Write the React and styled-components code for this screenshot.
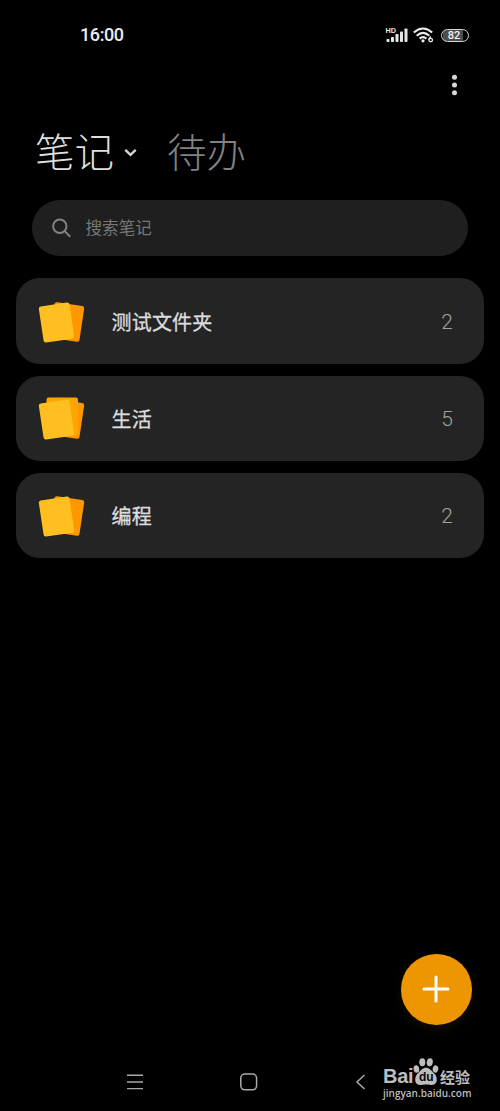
import React from "react";
import styled, { createGlobalStyle } from "styled-components";

const GlobalStyle = createGlobalStyle`
  * { box-sizing: border-box; }
  html, body { margin: 0; padding: 0; background: #000; }
  body { font-family: "Noto Sans", "Noto Sans CJK SC", sans-serif; }
  svg { display: block; }
`;

const Screen = styled.main`
  position: relative;
  width: 500px;
  height: 1111px;
  overflow: hidden;
  background: #000;
  display: flex;
  flex-direction: column;
`;

const StatusBar = styled.header`
  height: 70px;
  padding: 0 31px 0 80px;
  display: flex;
  align-items: center;
  justify-content: space-between;
`;

const Clock = styled.time`
  font: 500 18px/24px Roboto, sans-serif;
  letter-spacing: -0.4px;
  color: #ececec;
`;

const StatusIcons = styled.div`
  display: flex;
  align-items: center;
`;

const Battery = styled.div`
  width: 28px;
  height: 13px;
  margin-left: 7px;
  border: 1.4px solid #d6d6d6;
  border-radius: 7px;
  background: linear-gradient(90deg, #000 5%, #4d4d4d 5%, #4d4d4d 82%, #000 82%);
  color: #f4f4f4;
  font: 500 11px/11.5px Roboto, sans-serif;
  padding-right: 2px;
  text-align: center;
`;

const Toolbar = styled.div`
  height: 30px;
  padding-right: 41px;
  display: flex;
  align-items: center;
  justify-content: flex-end;
`;

const Tabs = styled.nav`
  height: 100px;
  padding: 0 35px;
  display: flex;
  align-items: center;
`;

const Tab = styled.span`
  font: 200 39.5px/60px "Noto Sans CJK SC", sans-serif;
  color: ${(p) => (p.$active ? "#dedede" : "#828282")};
  margin-left: ${(p) => (p.$active ? 0 : 30)}px;
  white-space: nowrap;
`;

const Chevron = styled.svg`
  margin: 5px 0 0 10px;
`;

const SearchBox = styled.div`
  height: 56px;
  margin: 0 32px;
  padding: 0 20px;
  border-radius: 28px;
  background: #1f1f1f;
  display: flex;
  align-items: center;
  gap: 13.5px;
`;

const Placeholder = styled.span`
  font: 400 16.6px/24px "Noto Sans CJK SC", sans-serif;
  color: #767676;
  padding-bottom: 2px;
`;

const FolderList = styled.ul`
  list-style: none;
  margin: 0;
  padding: 22.4px 16px 0;
  display: flex;
  flex-direction: column;
  gap: 11.8px;
`;

const Folder = styled.li`
  height: 85.4px;
  padding: 2px 31px 0 22px;
  border-radius: 24px;
  background: #242424;
  display: flex;
  align-items: center;
`;

const NotesIcon = styled.svg`
  margin-top: 1px;
`;

const FolderName = styled.span`
  flex: 1;
  margin-left: 25.5px;
  font: 400 20px/30px "Noto Sans CJK SC", sans-serif;
  letter-spacing: 0.2px;
  -webkit-text-stroke: 0.3px #dddddf;
  color: #dddddf;
`;

const Count = styled.span`
  font: 300 21px/30px Roboto, sans-serif;
  color: #a0a0a0;
`;

const AddButton = styled.button`
  position: absolute;
  right: 28.5px;
  bottom: 86.5px;
  width: 70.5px;
  height: 70.5px;
  padding: 0;
  border: 0;
  border-radius: 50%;
  background: #ee9602;
  box-shadow: 0 5px 10px rgba(238, 150, 2, 0.08);
  display: flex;
  align-items: center;
  justify-content: center;
`;

const NavBar = styled.footer`
  margin-top: auto;
  height: 58px;
  padding: 0 132px 0 126px;
  display: flex;
  align-items: center;
  justify-content: space-between;
`;

const Watermark = styled.div`
  position: absolute;
  left: 383px;
  top: 1055px;
  width: 92px;
  color: #bdbdbd;
`;

const Brand = styled.div`
  height: 32px;
  display: flex;
  align-items: flex-end;
`;

const BrandLatin = styled.span`
  font: 700 20px/18px "Liberation Sans", sans-serif;
  letter-spacing: -0.3px;
  padding-bottom: 2px;
  width: 30px;
`;

const BrandHan = styled.span`
  font: 700 15px/20px "Noto Sans CJK SC", sans-serif;
  margin-left: 1px;
`;

const Paw = styled.div`
  position: relative;
  width: 26px;
  height: 31px;
`;

const PawText = styled.span`
  position: absolute;
  left: 6px;
  top: 14px;
  color: #080808;
  font: 700 12px/14px "Liberation Sans", sans-serif;
`;

const Site = styled.div`
  font: 600 10px/12px "Open Sans", sans-serif;
  white-space: nowrap;
`;

const Signal = () => (
  <svg width="23" height="18" viewBox="0 0 23 18" fill="#e5e5e5">
    <text x="0.5" y="6.5" fontSize="7.5" fontWeight="700" fontFamily="Liberation Sans" textLength="10.5" lengthAdjust="spacingAndGlyphs">HD</text>
    <rect x="1.5" y="13" width="3" height="3" rx="0.8" />
    <rect x="6" y="11" width="3" height="5" rx="0.8" />
    <rect x="10.5" y="8" width="3" height="8" rx="0.8" />
    <rect x="15" y="5.5" width="3" height="10.5" rx="0.8" />
    <rect x="19.5" y="2.5" width="3" height="13.5" rx="0.8" />
  </svg>
);

const WifiIcon = styled.svg`
  margin-left: 5px;
`;

const Wifi = () => (
  <WifiIcon width="21" height="18" viewBox="0 0 21 18" fill="none" stroke="#ededed" strokeWidth="2.1">
    <path d="M.8 6.5Q10 -1.5 19.2 6.5M3.7 9.7Q10 4 16.3 9.7M6.6 12.6Q10 9.6 13.4 12.6" />
    <circle cx="10" cy="14.8" r="1.6" fill="#ededed" stroke="none" />
    <path d="M18 10.6Q15.9 12.3 15.9 14" strokeWidth="1.3" />
    <circle cx="17.7" cy="14.1" r="1.8" strokeWidth="1.3" />
  </WifiIcon>
);

const Notes = ({ full }) => (
  <NotesIcon width="48" height="46" viewBox="0 0 48 46">
    <rect x="14" y="4" width="30" height="36" rx="2.3" fill="#ff9700" transform="rotate(8.5 29 22)" />
    {full && <rect x="8.5" y="0.5" width="31.5" height="38" rx="2.3" fill="#ffa500" />}
    <rect x="3" y="4.3" width="31" height="36.5" rx="2.3" fill="#ffbf21" transform="rotate(-8.5 18.5 22.3)" />
  </NotesIcon>
);

const SquareIcon = styled.svg`
  margin-left: -2px;
`;

const folders = [
  { name: "测试文件夹", count: 2 },
  { name: "生活", count: 5, full: true },
  { name: "编程", count: 2 },
];

export default function App() {
  return (
    <>
      <GlobalStyle />
      <Screen>
        <StatusBar>
          <Clock>16:00</Clock>
          <StatusIcons>
            <Signal />
            <Wifi />
            <Battery>82</Battery>
          </StatusIcons>
        </StatusBar>
        <Toolbar>
          <svg width="9" height="24" viewBox="0 0 9 24" fill="#d9d9d9">
            <circle cx="4.5" cy="4.2" r="2.5" />
            <circle cx="4.5" cy="12" r="2.5" />
            <circle cx="4.5" cy="19.8" r="2.5" />
          </svg>
        </Toolbar>
        <Tabs>
          <Tab $active>笔记</Tab>
          <Chevron width="13" height="9" viewBox="0 0 13 9" fill="none" stroke="#d6d6d6" strokeWidth="2.4">
            <path d="M1.3 1.8L6.5 6.8L11.7 1.8" />
          </Chevron>
          <Tab>待办</Tab>
        </Tabs>
        <SearchBox>
          <svg width="20" height="20" viewBox="0 0 20 20" fill="none" stroke="#828282" strokeWidth="2">
            <circle cx="7.8" cy="8.3" r="6.7" />
            <path d="M12.7 13.1L18.2 18.7" />
          </svg>
          <Placeholder>搜索笔记</Placeholder>
        </SearchBox>
        <FolderList>
          {folders.map((f) => (
            <Folder key={f.name}>
              <Notes full={f.full} />
              <FolderName>{f.name}</FolderName>
              <Count>{f.count}</Count>
            </Folder>
          ))}
        </FolderList>
        <AddButton aria-label="新建">
          <svg width="28" height="28" viewBox="0 0 28 28" stroke="#fff" strokeWidth="3" strokeLinecap="round">
            <path d="M14 2V26M2 14H26" />
          </svg>
        </AddButton>
        <NavBar>
          <svg width="18" height="18" viewBox="0 0 18 18" stroke="#a8a8a8" strokeWidth="1.4">
            <path d="M1 2.2H17M1 9H17M1 15.6H17" />
          </svg>
          <SquareIcon width="18" height="18" viewBox="0 0 18 18" fill="none" stroke="#aaa" strokeWidth="1.5">
            <rect x="0.8" y="1" width="15.8" height="15.8" rx="4" />
          </SquareIcon>
          <svg width="13" height="18" viewBox="0 0 13 18" fill="none" stroke="#aaa" strokeWidth="1.5">
            <path d="M9.5 2L2 9L9.5 16" />
          </svg>
        </NavBar>
        <Watermark>
          <Brand>
            <BrandLatin>Bai</BrandLatin>
            <Paw>
              <svg width="26" height="30" viewBox="0 0 26 30" fill="#bdbdbd">
                <ellipse cx="3.4" cy="13" rx="2.8" ry="3.8" transform="rotate(-12 3.4 13)" />
                <ellipse cx="9.3" cy="6.3" rx="3" ry="4" />
                <ellipse cx="16.8" cy="6.3" rx="3" ry="4" transform="rotate(10 16.8 6.3)" />
                <ellipse cx="22.5" cy="13" rx="2.8" ry="3.7" transform="rotate(12 22.5 13)" />
                <path d="M13 11.8C9.5 11.8 8 14.5 5.2 17C1 20.5 .8 28.5 7 29C10 29.2 11 28.6 13 28.6S16 29.2 19 29C25.2 28.5 25 20.5 20.8 17C18 14.5 16.5 11.8 13 11.8Z" />
              </svg>
              <PawText>du</PawText>
            </Paw>
            <BrandHan>经验</BrandHan>
          </Brand>
          <Site>jingyan.baidu.com</Site>
        </Watermark>
      </Screen>
    </>
  );
}
